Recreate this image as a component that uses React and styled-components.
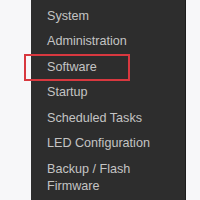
import React from "react"
import styled, { createGlobalStyle } from "styled-components"

const GlobalStyle = createGlobalStyle`
  html, body {
    margin: 0;
    padding: 0;
    background: #f7f7f9;
  }
`

const Page = styled.div`
  width: 200px;
  height: 200px;
  overflow: hidden;
  display: flex;
  background: #f7f7f9;
`

const Menu = styled.ul`
  list-style: none;
  margin: 0 0 0 31px;
  padding: 3.5px 0 0 0;
  width: 155px;
  height: 200px;
  box-sizing: border-box;
  background: #2d2d2d;
  border-right: 1px solid #1c1c1c;
  font-family: "Liberation Sans", Arial, sans-serif;
  font-size: 12.6px;
  line-height: 17px;
  color: #c4c4c4;
`

const Item = styled.li`
  position: relative;
  padding: 4.25px 24px 4.25px 16px;
`

const Highlight = styled.span`
  position: absolute;
  left: -7px;
  top: -1px;
  width: 106px;
  height: 27px;
  box-sizing: border-box;
  border: 2px solid #d8383f;
`

const items = [
  "System",
  "Administration",
  "Software",
  "Startup",
  "Scheduled Tasks",
  "LED Configuration",
  "Backup / Flash Firmware",
]

const App = () => (
  <Page>
    <GlobalStyle />
    <Menu>
      {items.map((item) => (
        <Item key={item}>
          {item}
          {item === "Software" ? <Highlight /> : null}
        </Item>
      ))}
    </Menu>
  </Page>
)

export default App
